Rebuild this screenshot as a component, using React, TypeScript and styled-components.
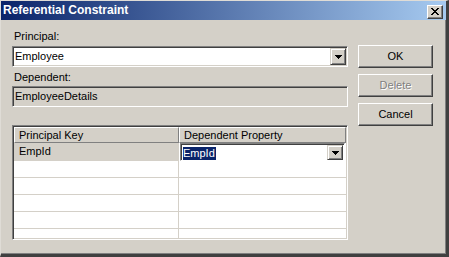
import React from "react";
import styled, { createGlobalStyle } from "styled-components";

const GlobalStyle = createGlobalStyle`
  body {
    margin: 0;
    background: #d4d0c8;
  }
`;

const Window = styled.div`
  width: 449px;
  height: 257px;
  box-sizing: border-box;
  background: #d4d0c8;
  border-top: 1px solid #dfdcd6;
  border-left: 1px solid #dfdcd6;
  border-right: 3px solid #404040;
  border-bottom: 3px solid #404040;
  box-shadow: inset -1px -1px #808080;
  display: flex;
  flex-direction: column;
  font-family: "Liberation Sans", Arial, sans-serif;
  font-size: 11px;
  color: #000;
  overflow: hidden;
`;

const TitleBar = styled.div`
  height: 19px;
  flex: none;
  display: flex;
  align-items: flex-start;
  padding-left: 2px;
  background: linear-gradient(to right, #0a246a, #a6caf0);
  color: #fff;
  font-weight: bold;
  font-size: 12px;
  line-height: 19px;
`;

const Title = styled.div`
  flex: 1;
  white-space: nowrap;
`;

const CloseButton = styled.div`
  width: 16px;
  height: 14px;
  margin: 4px 3px 0 0;
  box-sizing: border-box;
  background: #d4d0c8;
  border: 1px solid;
  border-color: #fff #404040 #404040 #fff;
  box-shadow: inset -1px -1px #808080;
  display: flex;
  align-items: center;
  justify-content: center;
  padding-bottom: 1px;
`;

const Body = styled.div`
  flex: 1;
  display: flex;
  gap: 10px;
  padding: 0 13px 0 11px;
`;

const LeftColumn = styled.div`
  width: 336px;
  display: flex;
  flex-direction: column;
`;

const Label = styled.div<{ $top: number }>`
  margin-top: ${(p) => p.$top}px;
  line-height: 13px;
  height: 13px;
  padding-left: 2px;
`;

const Sunken = styled.div<{ $top: number; $bg: string }>`
  margin-top: ${(p) => p.$top}px;
  height: 21px;
  box-sizing: border-box;
  background: ${(p) => p.$bg};
  border: 1px solid;
  border-color: #808080 #fff #fff #808080;
  padding: 1px;
  box-shadow: inset 1px 1px #404040, inset -1px -1px #d4d0c8;
  display: flex;
  align-items: stretch;
`;

const FieldText = styled.div`
  flex: 1;
  line-height: 17px;
  padding-left: 1px;
  white-space: nowrap;
`;

const DropButton = styled.div<{ $h: number }>`
  width: 16px;
  height: ${(p) => p.$h}px;
  flex: none;
  box-sizing: border-box;
  background: #d4d0c8;
  border: 1px solid;
  border-color: #d4d0c8 #404040 #404040 #d4d0c8;
  box-shadow: inset 1px 1px #fff, inset -1px -1px #808080;
  display: flex;
  align-items: center;
  justify-content: center;
`;

const GridFrame = styled.div`
  margin-top: 18px;
  height: 115px;
  box-sizing: border-box;
  border: 1px solid;
  border-color: #808080 #fff #fff #808080;
  padding: 1px;
  box-shadow: inset 1px 1px #404040, inset -1px -1px #d4d0c8;
  overflow: hidden;
`;

const GridInner = styled.div`
  height: 100%;
  background: #fff;
  display: grid;
  grid-template-columns: 165px 1fr;
  grid-auto-rows: 17px;
  grid-template-rows: 16px 18px;
  overflow: hidden;
`;

const HeaderCell = styled.div`
  box-sizing: border-box;
  background: #d4d0c8;
  border: 1px solid;
  border-color: #fff #808080 #808080 #fff;
  padding-left: 4px;
  line-height: 14px;
  white-space: nowrap;
`;

const Cell = styled.div<{ $first?: boolean; $selected?: boolean }>`
  box-sizing: border-box;
  background: ${(p) => (p.$selected ? "#d4d0c8" : "#fff")};
  border-bottom: 1px solid #d4d0c8;
  border-right: ${(p) => (p.$first ? "1px solid #d4d0c8" : "none")};
  padding-left: 5px;
  line-height: 16px;
  white-space: nowrap;
`;

const EditorCell = styled.div`
  box-sizing: border-box;
  background: #fff;
  border: 1px solid;
  border-color: #808080 #fff #fff #808080;
  padding: 1px;
  box-shadow: inset 1px 1px #404040;
  margin: 0 1px 0 1px;
  display: flex;
  align-items: flex-start;
`;

const Highlight = styled.span`
  background: #0a246a;
  color: #fff;
  line-height: 13px;
  display: inline-block;
  padding: 0 1px 0 0;
`;

const ButtonColumn = styled.div`
  width: 75px;
  padding-top: 25px;
  display: flex;
  flex-direction: column;
  gap: 6px;
`;

const Button = styled.div<{ $disabled?: boolean }>`
  height: 23px;
  box-sizing: border-box;
  background: #d4d0c8;
  border: 1px solid;
  border-color: #fff #404040 #404040 #fff;
  box-shadow: inset -1px -1px #808080;
  display: flex;
  align-items: center;
  justify-content: center;
  padding-bottom: 1px;
  color: ${(p) => (p.$disabled ? "#808080" : "#000")};
  text-shadow: ${(p) => (p.$disabled ? "1px 1px #fff" : "none")};
`;

const Arrow = () => (
  <svg width="7" height="4" viewBox="0 0 7 4" shapeRendering="crispEdges">
    <path d="M0 0h7v1H0z M1 1h5v1H1z M2 2h3v1H2z M3 3h1v1H3z" fill="#000" />
  </svg>
);

const CloseGlyph = () => (
  <svg width="8" height="7" viewBox="0 0 8 7" shapeRendering="crispEdges">
    <path
      d="M0 0h2v1H0z M6 0h2v1H6z M1 1h2v1H1z M5 1h2v1H5z M2 2h4v1H2z M3 3h2v1H3z M2 4h4v1H2z M1 5h2v1H1z M5 5h2v1H5z M0 6h2v1H0z M6 6h2v1H6z"
      fill="#000"
    />
  </svg>
);

const emptyRows = [0, 1, 2, 3, 4];

export default function App() {
  return (
    <>
      <GlobalStyle />
      <Window>
        <TitleBar>
          <Title>Referential Constraint</Title>
          <CloseButton>
            <CloseGlyph />
          </CloseButton>
        </TitleBar>
        <Body>
          <LeftColumn>
            <Label $top={10}>Principal:</Label>
            <Sunken $top={3} $bg="#fff">
              <FieldText>Employee</FieldText>
              <DropButton $h={17}>
                <Arrow />
              </DropButton>
            </Sunken>
            <Label $top={4}>Dependent:</Label>
            <Sunken $top={2} $bg="#d4d0c8">
              <FieldText>EmployeeDetails</FieldText>
            </Sunken>
            <GridFrame>
              <GridInner>
                <HeaderCell>Principal Key</HeaderCell>
                <HeaderCell>Dependent Property</HeaderCell>
                <Cell $first $selected>
                  EmpId
                </Cell>
                <EditorCell>
                  <FieldText>
                    <Highlight>EmpId</Highlight>
                  </FieldText>
                  <DropButton $h={15}>
                    <Arrow />
                  </DropButton>
                </EditorCell>
                {emptyRows.map((r) => (
                  <React.Fragment key={r}>
                    <Cell $first />
                    <Cell />
                  </React.Fragment>
                ))}
              </GridInner>
            </GridFrame>
          </LeftColumn>
          <ButtonColumn>
            <Button>OK</Button>
            <Button $disabled>Delete</Button>
            <Button>Cancel</Button>
          </ButtonColumn>
        </Body>
      </Window>
    </>
  );
}
